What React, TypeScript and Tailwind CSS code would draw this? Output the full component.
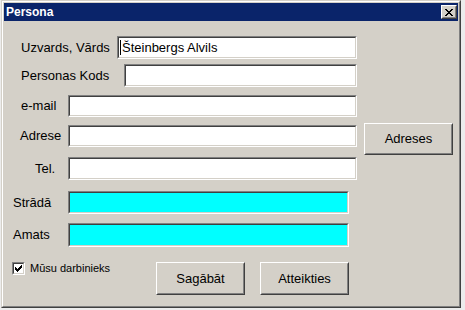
import { ReactNode } from "react";
import clsx from "clsx";

// sunken Win2k edit box
function Field({ className, fill = "bg-white", children }: { className: string; fill?: string; children?: ReactNode }) {
  return (
    <div className={clsx("border border-t-[#808080] border-l-[#808080] border-r-white border-b-white", className)}>
      <div
        className={clsx(
          "h-full w-full border border-t-[#404040] border-l-[#404040] border-r-[#d4d0c8] border-b-[#d4d0c8] flex items-center",
          fill
        )}
      >
        {children}
      </div>
    </div>
  );
}

function WinButton({ className, children }: { className: string; children: ReactNode }) {
  return (
    <button
      type="button"
      className={clsx(
        "shrink-0 border border-t-white border-l-white border-r-[#404040] border-b-[#404040] bg-[#d4d0c8] p-0",
        className
      )}
    >
      <div className="h-full w-full border border-transparent border-r-[#808080] border-b-[#808080] flex items-center justify-center text-[13px] text-black">
        {children}
      </div>
    </button>
  );
}

function App() {
  return (
    <div className="min-h-screen bg-[#ececec] pl-px font-['Liberation_Sans',Arial,sans-serif] text-black">
      <div className="w-[460px] h-[308px] border border-t-[#d4d0c8] border-l-[#d4d0c8] border-r-[#404040] border-b-[#404040] bg-[#d4d0c8]">
        <div className="h-full w-full border border-t-white border-l-white border-r-[#808080] border-b-[#808080] p-px flex flex-col">
          {/* title bar */}
          <div className="h-[18px] bg-[#0a246a] flex items-center justify-between pl-[2px] pr-[1px]">
            <span className="text-white font-bold text-[12px] leading-none">Persona</span>
            <button
              type="button"
              className="w-[16px] h-[14px] border border-t-white border-l-white border-r-[#404040] border-b-[#404040] bg-[#d4d0c8] p-0"
            >
              <div className="h-full w-full border border-transparent border-r-[#808080] border-b-[#808080] flex items-center justify-center">
                <svg width="8" height="7" viewBox="0 0 8 7" shapeRendering="crispEdges">
                  <path d="M0 0h2v1h-2zM6 0h2v1h-2zM1 1h2v1h-2zM5 1h2v1h-2zM2 2h4v1h-4zM3 3h2v1h-2zM2 4h4v1h-4zM1 5h2v1h-2zM5 5h2v1h-2zM0 6h2v1h-2zM6 6h2v1h-2z" fill="#000" />
                </svg>
              </div>
            </button>
          </div>

          {/* body */}
          <div className="flex-1 pt-[15px] text-[13px]">
            <div className="flex">
              <div className="w-[353px] flex flex-col">
                <div className="flex items-center h-[23px]">
                  <span className="ml-[17px] w-[96px]">Uzvards, Vārds</span>
                  <Field className="w-[240px] h-[23px]">
                    <span className="ml-px w-px h-[15px] bg-black" />
                    <span className="ml-px">Šteinbergs Alvils</span>
                  </Field>
                </div>
                <div className="flex items-center h-[23px] mt-[5px]">
                  <span className="ml-[17px] w-[103px]">Personas Kods</span>
                  <Field className="w-[233px] h-[23px]" />
                </div>
                <div className="flex items-center h-[22px] mt-[8px]">
                  <span className="ml-[17px] w-[47px]">e-mail</span>
                  <Field className="w-[289px] h-[22px]" />
                </div>
                <div className="flex items-center h-[22px] mt-[8px]">
                  <span className="ml-[16px] w-[48px]">Adrese</span>
                  <Field className="w-[289px] h-[22px]" />
                </div>
                <div className="flex items-center h-[23px] mt-[10px]">
                  <span className="ml-[31px] w-[33px]">Tel.</span>
                  <Field className="w-[289px] h-[23px]" />
                </div>
                <div className="flex items-center h-[23px] mt-[11px]">
                  <span className="ml-[9px] w-[55px]">Strādā</span>
                  <Field className="w-[281px] h-[23px]" fill="bg-[#00ffff]" />
                </div>
                <div className="flex items-center h-[24px] mt-[9px]">
                  <span className="ml-[9px] w-[55px]">Amats</span>
                  <Field className="w-[281px] h-[24px]" fill="bg-[#00ffff]" />
                </div>
              </div>
              <div className="ml-[7px] pt-[87px]">
                <WinButton className="w-[89px] h-[32px]">Adreses</WinButton>
              </div>
            </div>

            <div className="flex items-start mt-[13px]">
              <div className="ml-[8px] w-[144px] flex items-center">
                <div className="w-[13px] h-[13px] border border-t-[#808080] border-l-[#808080] border-r-white border-b-white">
                  <div className="h-full w-full border border-t-[#404040] border-l-[#404040] border-r-[#d4d0c8] border-b-[#d4d0c8] bg-white flex items-center justify-center">
                    <svg width="7" height="7" viewBox="0 0 7 7" shapeRendering="crispEdges">
                      <path d="M6 0h1v3h-1zM5 1h1v3h-1zM4 2h1v3h-1zM3 3h1v3h-1zM2 4h1v3h-1zM1 3h1v3h-1zM0 2h1v3h-1z" fill="#000" />
                    </svg>
                  </div>
                </div>
                <span className="ml-[5px] text-[11px]">Mūsu darbinieks</span>
              </div>
              <WinButton className="mt-[2px] w-[89px] h-[33px]">Sagābāt</WinButton>
              <WinButton className="mt-[2px] ml-[15px] w-[89px] h-[33px]">Atteikties</WinButton>
            </div>
          </div>
        </div>
      </div>
    </div>
  );
}

export default App;
